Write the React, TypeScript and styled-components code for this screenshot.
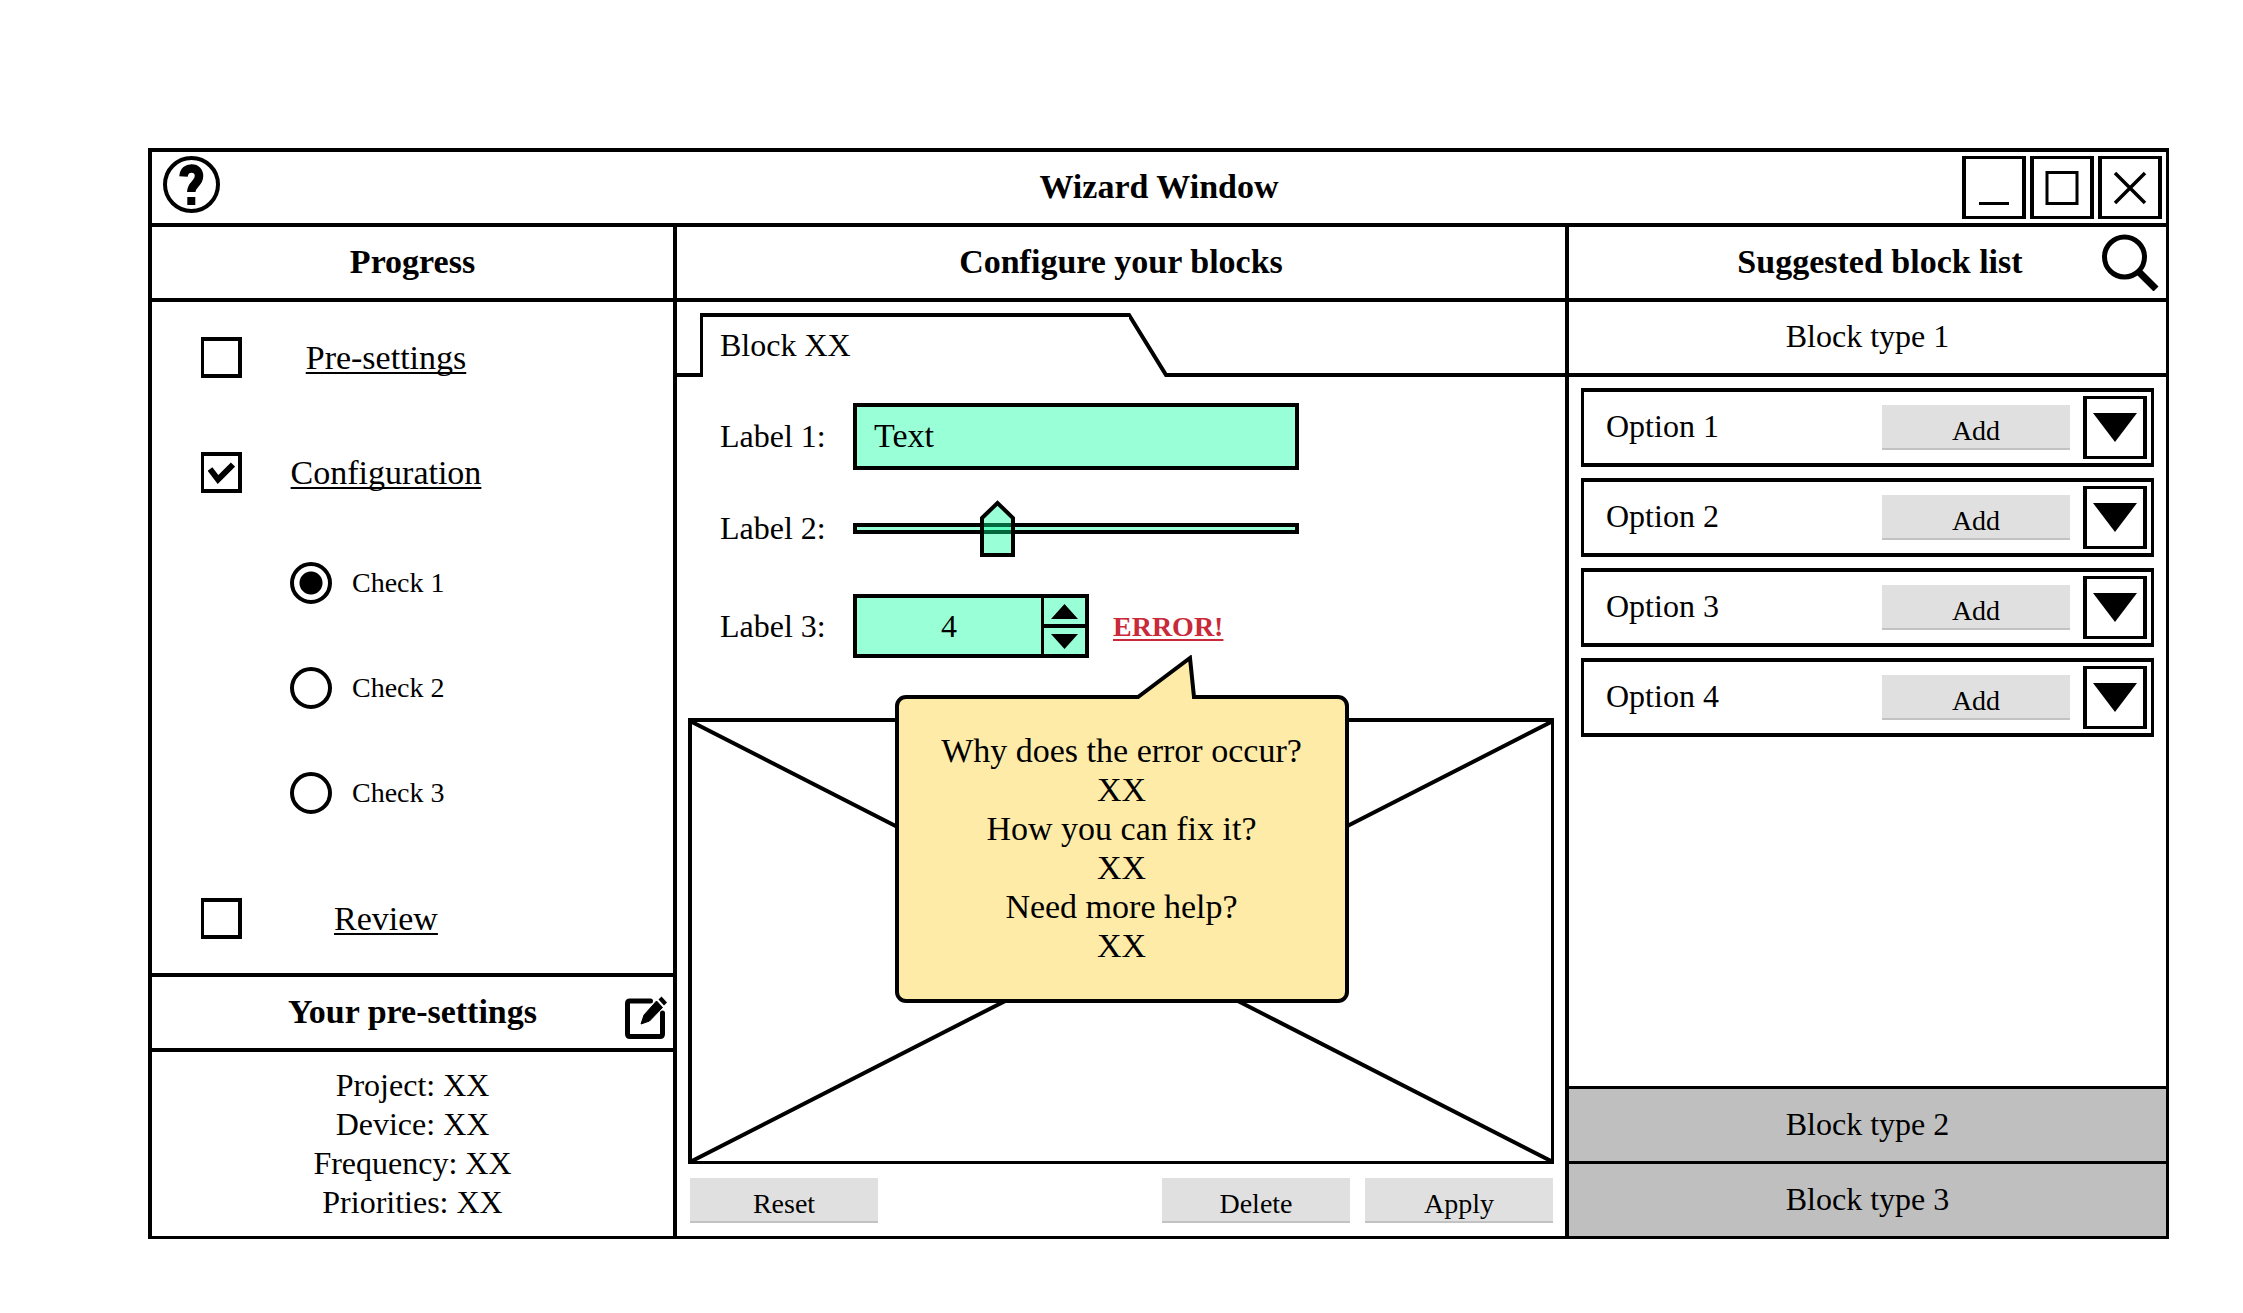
import React, { useState } from "react";
import styled, { createGlobalStyle } from "styled-components";

const INK = "#000";
const MINT = "rgba(0, 255, 153, 0.4)";
const BUTTON_GREY = "#e0e0e0";
const BUTTON_EDGE = "#c2c2c2";

const TEXT_LARGE = "34px";
const TEXT_MEDIUM = "32px";
const TEXT_SMALL = "28px";

const THUMB = encodeURIComponent(
  '<svg xmlns="http://www.w3.org/2000/svg" width="35" height="57" viewBox="0 0 35 57"><path d="M2 18 L17.500 3 L33 18 V55 H2 Z" fill="#00ff99" fill-opacity="0.4" stroke="#000" stroke-width="4"/></svg>'
);

const GlobalStyle = createGlobalStyle`
  *, *::before, *::after { box-sizing: border-box; }
  body { margin: 0; background: #fff; }
  body, button, input {
    color: ${INK};
    font-family: "Liberation Serif", "Times New Roman", serif;
    font-size: ${TEXT_LARGE};
    line-height: 39px;
  }
  button { margin: 0; padding: 0; border: 0; background: none; cursor: pointer; }
  h1, h2, p, ul, dl, dd { margin: 0; padding: 0; }
  ul { list-style: none; }
`;

const Page = styled.div`
  display: flex;
  min-height: 100vh;
  padding: 148px 74px 74px 148px;
`;

const Window = styled.main`
  flex: 1;
  display: flex;
  flex-direction: column;
  border: solid ${INK};
  border-width: 4px 3px 3px 4px;
`;

const Bar = styled.header<{ $left?: number; $right?: number; $top?: boolean }>`
  flex: none;
  display: grid;
  grid-template-columns: 1fr auto 1fr;
  align-items: center;
  height: 75px;
  padding-left: ${(p) => p.$left ?? 6}px;
  padding-right: ${(p) => p.$right ?? 6}px;
  border-bottom: 4px solid ${INK};
  ${(p) => p.$top && `height: 79px; border-top: 4px solid ${INK};`}
`;

const BarTitle = styled.h2`
  grid-column: 2;
  padding-bottom: 2px;
  font-size: ${TEXT_LARGE};
  font-weight: 700;
  white-space: nowrap;
`;

const IconButton = styled.button<{ $align?: string }>`
  display: flex;
  justify-self: end;
  align-self: ${(p) => p.$align ?? "center"};

  svg { display: block; }
`;

const HelpButton = styled(IconButton)`
  justify-self: start;
  margin: 4px 7px;
`;

const EditButton = styled(IconButton)`
  margin-bottom: 9px;
`;

const WindowControls = styled.div`
  display: flex;
  justify-self: end;
  gap: 4px;
`;

const FramedButton = styled.button`
  flex: none;
  display: grid;
  place-items: center;
  width: 64px;
  height: 63px;
  border: solid ${INK};
  border-width: 3px 4px;

  svg { display: block; }
`;

const Columns = styled.div`
  flex: 1;
  display: grid;
  grid-template-columns: 525fr 892fr 597fr;
`;

const Column = styled.section`
  display: flex;
  flex-direction: column;
  min-width: 0;

  &:not(:last-child) { border-right: 4px solid ${INK}; }
`;

const Steps = styled.ul`
  flex: 1;
  display: flex;
  flex-direction: column;
  padding: 35px 49px 34px;
`;

const Step = styled.li`
  display: grid;
  grid-template-columns: 41px 288px;
  align-items: center;
  height: 41px;

  & + & { margin-top: 74px; }
`;

const TextLink = styled.a`
  justify-self: center;
  color: ${INK};
  text-decoration: underline;
  text-decoration-thickness: 2px;
  text-decoration-skip-ink: none;
  text-underline-offset: 3px;
`;

const ErrorLink = styled(TextLink)`
  color: #c92a39;
  font-size: ${TEXT_SMALL};
  font-weight: 700;
`;

const Tick = styled.input`
  appearance: none;
  width: 41px;
  height: 41px;
  margin: 0;
  border: solid ${INK};
  border-width: 4px 4px 4px 3px;

  &:checked {
    background: center / 27px 22px no-repeat
      url("data:image/svg+xml,%3Csvg xmlns='http://www.w3.org/2000/svg' viewBox='0 0 27 22'%3E%3Cpath d='M2 7 L10 17.500 L25 2.500' fill='none' stroke='%23000' stroke-width='6'/%3E%3C/svg%3E");
  }
`;

const Checks = styled.ul`
  display: flex;
  flex-direction: column;
  gap: 63px;
  margin: 69px 0 84px;
  padding-left: 89px;
`;

const Check = styled.li`
  display: flex;
  align-items: center;
  gap: 20px;
  height: 42px;
  font-size: ${TEXT_SMALL};

  label { padding-bottom: 2px; }
`;

const Radio = styled.input`
  appearance: none;
  width: 42px;
  height: 42px;
  margin: 0;
  border: 4px solid ${INK};
  border-radius: 50%;

  &:checked { background: radial-gradient(circle, ${INK} 11px, transparent 12px); }
`;

const Summary = styled.dl`
  height: 184px;
  padding-top: 14px;
  font-size: ${TEXT_MEDIUM};
  text-align: center;

  dt, dd { display: inline; }
`;

const TabStrip = styled.div`
  display: flex;
  height: 75px;
  padding-top: 11px;

  svg { flex: none; display: block; }
`;

const StripLine = styled.span<{ $grow?: boolean }>`
  flex: ${(p) => (p.$grow ? "1" : "0 0 23px")};
  border-bottom: 4px solid ${INK};
`;

const Tab = styled.button`
  width: 429px;
  padding: 0 0 4px 17px;
  border: solid ${INK};
  border-width: 4px 0 0 3px;
  font-size: ${TEXT_MEDIUM};
  text-align: left;
`;

const Form = styled.form`
  display: flex;
  flex-direction: column;
  gap: 30px;
  padding: 26px 24px 60px 43px;
`;

const Field = styled.div<{ $after?: number }>`
  display: flex;
  align-items: center;
  padding-bottom: ${(p) => p.$after ?? 0}px;
  font-size: ${TEXT_MEDIUM};

  > label { flex: 0 0 133px; }
`;

const TextBox = styled.input`
  width: 446px;
  height: 67px;
  padding: 0 17px 2px;
  border: 4px solid ${INK};
  border-radius: 0;
  background: ${MINT};
  background-clip: padding-box;
`;

const Range = styled.input`
  appearance: none;
  width: 446px;
  height: 57px;
  margin: 0;
  background: none;

  &::-webkit-slider-runnable-track {
    height: 11px;
    border: 4px solid ${INK};
    background: ${MINT};
    background-clip: padding-box;
  }
  &::-webkit-slider-thumb {
    appearance: none;
    width: 35px;
    height: 57px;
    margin-top: -27px;
    background: url("data:image/svg+xml,${THUMB}");
  }
`;

const Spinner = styled.div`
  display: flex;
  width: 236px;
  height: 64px;
  margin-right: 24px;
  border: 4px solid ${INK};
  background: ${MINT};
  background-clip: padding-box;
`;

const SpinValue = styled.input`
  appearance: textfield;
  flex: 1;
  min-width: 0;
  padding: 0;
  border: 0;
  background: none;
  font-size: ${TEXT_MEDIUM};
  text-align: center;

  &::-webkit-inner-spin-button { appearance: none; margin: 0; }
`;

const SpinButtons = styled.div`
  flex: 0 0 44px;
  display: flex;
  flex-direction: column;
  border-left: 3px solid ${INK};

  button {
    flex: 1;
    display: grid;
    place-items: center;
  }
  button + button { border-top: 4px solid ${INK}; }
`;

const Preview = styled.div`
  position: relative;
  flex: 1;
  margin: 0 11px;
  border: solid ${INK};
  border-width: 4px 3px 3px 4px;
`;

const Cross = styled.svg`
  position: absolute;
  inset: 0;
  width: 100%;
  height: 100%;
`;

const Balloon = styled.div`
  position: absolute;
  top: -27px;
  left: 50%;
  width: 454px;
  padding: 32px 0 34px;
  transform: translateX(-50%);
  border: 4px solid ${INK};
  border-radius: 11px;
  background: #ffeba8;
  text-align: center;
  white-space: nowrap;
`;

const Pointer = styled.svg`
  position: absolute;
  top: -44px;
  right: 146px;
`;

const Actions = styled.footer`
  display: flex;
  gap: 15px;
  padding: 14px 12px 13px 13px;
`;

const GreyButton = styled.button<{ $first?: boolean }>`
  width: 188px;
  height: 45px;
  padding-top: 8px;
  margin-right: ${(p) => (p.$first ? "auto" : 0)};
  border-bottom: 2px solid ${BUTTON_EDGE};
  background: ${BUTTON_GREY};
  font-size: ${TEXT_SMALL};
  line-height: 32px;
`;

const BlockType = styled.button<{ $open?: boolean }>`
  flex: none;
  width: 100%;
  height: 75px;
  padding-bottom: 2px;
  border: solid ${INK};
  border-width: ${(p) => (p.$open ? "0 0 4px" : "3px 0 0")};
  background: ${(p) => (p.$open ? "transparent" : "#bfbfbf")};
  font-size: ${TEXT_MEDIUM};
`;

const Options = styled.ul`
  flex: 1;
  display: flex;
  flex-direction: column;
  gap: 11px;
  padding: 11px 12px;
`;

const Option = styled.li`
  display: flex;
  align-items: center;
  gap: 13px;
  height: 79px;
  padding: 0 4px 0 22px;
  border: solid ${INK};
  border-width: 4px 3px;
  font-size: ${TEXT_MEDIUM};

  > span { flex: 1; padding-bottom: 2px; }
`;

const Triangle = ({ width, height, up }: { width: number; height: number; up?: boolean }) => (
  <svg width={width} height={height} viewBox="0 0 10 10" preserveAspectRatio="none" aria-hidden="true">
    <path d={up ? "M0 10 L5 0 L10 10 Z" : "M0 0 H10 L5 10 Z"} />
  </svg>
);

const steps = ["Pre-settings", "Configuration", "Review"];
const checks = ["Check 1", "Check 2", "Check 3"];
const presets = ["Project", "Device", "Frequency", "Priorities"];
const options = ["Option 1", "Option 2", "Option 3", "Option 4"];
const help = ["Why does the error occur?", "XX", "How you can fix it?", "XX", "Need more help?", "XX"];

const StepRow = ({ name, done }: { name: string; done?: boolean }) => (
  <Step>
    <Tick type="checkbox" defaultChecked={done} aria-labelledby={`step-${name}`} />
    <TextLink id={`step-${name}`} href={`#${name}`}>{name}</TextLink>
  </Step>
);

export default function App() {
  const [amount, setAmount] = useState(4);

  return (
    <>
      <GlobalStyle />
      <Page>
        <Window>
          <Bar $left={4} $right={4}>
            <HelpButton $align="start" aria-label="Help">
              <svg width="57" height="57" viewBox="0 0 57 57" fill="none" stroke="#000">
                <circle cx="28.500" cy="28.500" r="26.500" strokeWidth="4" />
                <path d="M20.500 20.500 C21 14.500 24.500 12.500 28.500 12.500 C33.500 12.500 36 15.500 36 20 C36 28 28.300 28 28.300 36" strokeWidth="8.500" />
                <path d="M24.300 45 H32.300" strokeWidth="8" />
              </svg>
            </HelpButton>
            <BarTitle as="h1">Wizard Window</BarTitle>
            <WindowControls>
              <FramedButton aria-label="Minimize">
                <svg width="34" height="34" stroke="#000" strokeWidth="3"><path d="M2 32.500 H32" /></svg>
              </FramedButton>
              <FramedButton aria-label="Maximize">
                <svg width="34" height="34" fill="none" stroke="#000" strokeWidth="3"><path d="M2 1.500 H32 V32.500 H2 Z" /></svg>
              </FramedButton>
              <FramedButton aria-label="Close">
                <svg width="34" height="34" stroke="#000" strokeWidth="3.500"><path d="M2 2 L32 32 M32 2 L2 32" /></svg>
              </FramedButton>
            </WindowControls>
          </Bar>

          <Columns>
            <Column>
              <Bar><BarTitle>Progress</BarTitle></Bar>
              <Steps>
                <StepRow name={steps[0]} />
                <StepRow name={steps[1]} done />
                <li>
                  <Checks>
                    {checks.map((name, i) => (
                      <Check key={name}>
                        <Radio type="radio" name="check" id={`check-${i}`} defaultChecked={i === 0} />
                        <label htmlFor={`check-${i}`}>{name}</label>
                      </Check>
                    ))}
                  </Checks>
                </li>
                <StepRow name={steps[2]} />
              </Steps>
              <Bar $top>
                <BarTitle>Your pre-settings</BarTitle>
                <EditButton $align="end" aria-label="Edit pre-settings">
                  <svg width="42" height="43" viewBox="0 0 42 43" fill="none" stroke="#000">
                    <path d="M25.500 5 H5 Q2.500 5 2.500 7.500 V38 Q2.500 40.500 5 40.500 H35 Q37.500 40.500 37.500 38 V17" strokeWidth="5" strokeLinecap="round" />
                    <path d="M16 28 L19 19 L31.500 5 L37.500 11.500 L24.500 25 Z" fill="#000" stroke="#000" strokeWidth="1" strokeLinejoin="round" />
                    <path d="M33.500 3.500 L36.500 0.500 L42 6.500 L39 9.500 Z" fill="#000" stroke="none" />
                  </svg>
                </EditButton>
              </Bar>
              <Summary>
                {presets.map((name) => (
                  <div key={name}><dt>{name}: </dt><dd>XX</dd></div>
                ))}
              </Summary>
            </Column>

            <Column>
              <Bar><BarTitle>Configure your blocks</BarTitle></Bar>
              <TabStrip>
                <StripLine />
                <Tab>Block XX</Tab>
                <svg width="38" height="64" viewBox="0 0 38 64" fill="none" stroke="#000" strokeWidth="4" aria-hidden="true">
                  <path d="M-2 2 H0 L37 62 H39" />
                </svg>
                <StripLine $grow />
              </TabStrip>
              <Form onSubmit={(e) => e.preventDefault()}>
                <Field>
                  <label htmlFor="label-1">Label 1:</label>
                  <TextBox id="label-1" type="text" defaultValue="Text" />
                </Field>
                <Field $after={7}>
                  <label htmlFor="label-2">Label 2:</label>
                  <Range id="label-2" type="range" step="0.5" defaultValue="30.5" />
                </Field>
                <Field>
                  <label htmlFor="label-3">Label 3:</label>
                  <Spinner>
                    <SpinValue
                      id="label-3"
                      type="number"
                      value={amount}
                      onChange={(e) => setAmount(Number(e.target.value))}
                    />
                    <SpinButtons>
                      <button type="button" aria-label="Increase" onClick={() => setAmount(amount + 1)}>
                        <Triangle width={27} height={15} up />
                      </button>
                      <button type="button" aria-label="Decrease" onClick={() => setAmount(amount - 1)}>
                        <Triangle width={27} height={15} />
                      </button>
                    </SpinButtons>
                  </Spinner>
                  <ErrorLink href="#error-help">ERROR!</ErrorLink>
                </Field>
              </Form>
              <Preview>
                <Cross viewBox="0 0 100 100" preserveAspectRatio="none" stroke="#000" strokeWidth="4" aria-hidden="true">
                  <path d="M0 0 L100 100 M100 0 L0 100" vectorEffect="non-scaling-stroke" />
                </Cross>
                <Balloon id="error-help" role="tooltip">
                  <Pointer width="64" height="48" viewBox="0 0 64 48" aria-hidden="true">
                    <path d="M2 48 L5 40 L57 4 L60 48 Z" fill="#ffeba8" />
                    <path d="M1 42 H3 L55 3 L59 42 H63" fill="none" stroke="#000" strokeWidth="4" />
                  </Pointer>
                  {help.map((line, i) => <p key={i}>{line}</p>)}
                </Balloon>
              </Preview>
              <Actions>
                <GreyButton $first>Reset</GreyButton>
                <GreyButton>Delete</GreyButton>
                <GreyButton>Apply</GreyButton>
              </Actions>
            </Column>

            <Column>
              <Bar $left={32} $right={7}>
                <BarTitle>Suggested block list</BarTitle>
                <IconButton aria-label="Search blocks">
                  <svg width="57" height="57" viewBox="0 0 57 57" fill="none" stroke="#000">
                    <circle cx="22.500" cy="23" r="20" strokeWidth="5" />
                    <path d="M36 37 L54 55" strokeWidth="7" />
                  </svg>
                </IconButton>
              </Bar>
              <BlockType $open aria-expanded="true">Block type 1</BlockType>
              <Options>
                {options.map((name) => (
                  <Option key={name}>
                    <span>{name}</span>
                    <GreyButton>Add</GreyButton>
                    <FramedButton aria-label={`Expand ${name}`}>
                      <Triangle width={44} height={29} />
                    </FramedButton>
                  </Option>
                ))}
              </Options>
              <BlockType aria-expanded="false">Block type 2</BlockType>
              <BlockType aria-expanded="false">Block type 3</BlockType>
            </Column>
          </Columns>
        </Window>
      </Page>
    </>
  );
}
